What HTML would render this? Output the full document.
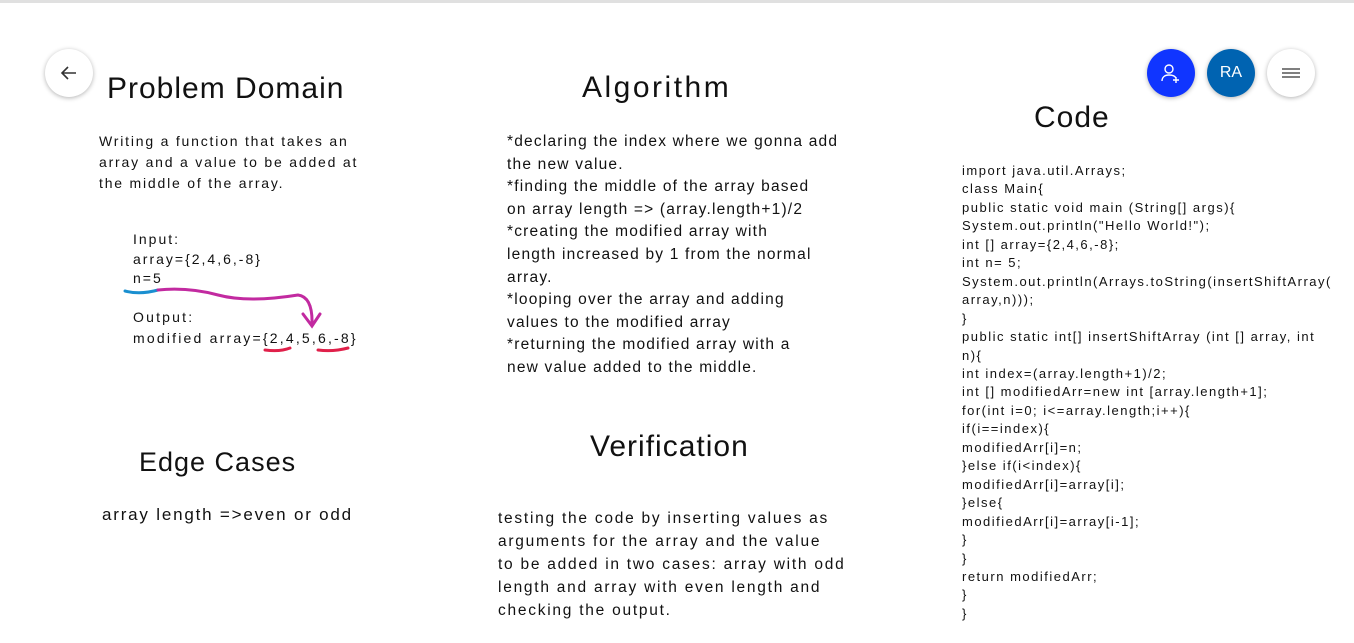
<!DOCTYPE html>
<html><head><meta charset="utf-8"><style>
body{margin:0;width:1354px;height:643px;background:#fff;position:relative;overflow:hidden;font-family:"Liberation Sans",sans-serif;color:#111}
.t{position:absolute;white-space:nowrap}
.h{font-size:30px;letter-spacing:1px}
.b{font-size:15px;line-height:22.6px}
.c{font-size:13px;line-height:18.45px;letter-spacing:1.5px}
.btn{position:absolute;width:48px;height:48px;border-radius:50%;box-shadow:0 1px 5px rgba(0,0,0,.3);display:flex;align-items:center;justify-content:center}
</style></head><body>
<div style="position:absolute;left:0;top:0;width:1354px;height:3px;background:#e0e0e0"></div>
<div class="btn" style="left:45px;top:49px;background:#fff"><svg width="20" height="20" viewBox="0 0 20 20"><path d="M17 10H4M9 4L3 10l6 6" fill="none" stroke="#333" stroke-width="1.6"/></svg></div>
<div class="btn" style="left:1147px;top:49px;background:#1035ff"><svg width="22" height="22" viewBox="0 0 22 22" fill="none" stroke="#fff" stroke-width="1.4"><circle cx="9" cy="7" r="4"/><path d="M2 19c0-4 3-6 7-6s6 1 7 3M16 15v6M13 18h6"/></svg></div>
<div class="btn" style="left:1207px;top:49px;background:#0063b1;color:#fff;font-size:16px">RA</div>
<div class="btn" style="left:1267px;top:49px;background:#fff"><svg width="18" height="12"><path d="M0 2h18M0 6h18M0 10h18" stroke="#555" stroke-width="1.6"/></svg></div>

<div class="t h" style="left:107px;top:72px">Problem Domain</div>
<div class="t h" style="left:582px;top:71px;letter-spacing:2.5px">Algorithm</div>
<div class="t h" style="left:1034px;top:101px">Code</div>
<div class="t h" style="left:139px;top:447px;font-size:27px">Edge Cases</div>
<div class="t h" style="left:590px;top:430px">Verification</div>

<div class="t b" style="left:99px;top:131px;font-size:14px;line-height:21px;letter-spacing:1.8px">Writing a function that takes an<br>array and a value to be added at<br>the middle of the array.</div>
<div class="t b" style="left:133px;top:230px;font-size:14px;line-height:19.5px;letter-spacing:2px">Input:<br>array={2,4,6,-8}<br>n=5</div>
<div class="t b" style="left:133px;top:307px;font-size:14px;line-height:21px;letter-spacing:2.2px">Output:<br>modified array={2,4,5,6,-8}</div>
<svg style="position:absolute;left:120px;top:280px" width="250" height="80" fill="none" stroke-width="3" stroke-linecap="round">
<path d="M5 11q15 4 33 -1" stroke="#1a8fd0"/>
<path d="M38 10q30 -3 60 5t80 0q15 2 14 30M183 34l9 12 8-12" stroke="#c22aa0"/>
<path d="M145 70q15 2 25 -2M198 70q15 2 30 -2" stroke="#e0204a"/>
</svg>
<div class="t b" style="left:102px;top:504px;font-size:17px;letter-spacing:1.8px">array length =&gt;even or odd</div>

<div class="t b" style="left:507px;top:131px;font-size:15.5px;letter-spacing:1.2px">*declaring the index where we gonna add<br>the new value.<br>*finding the middle of the array based<br>on array length =&gt; (array.length+1)/2<br>*creating the modified array with<br>length increased by 1 from the normal<br>array.<br>*looping over the array and adding<br>values to the modified array<br>*returning the modified array with a<br>new value added to the middle.</div>
<div class="t b" style="left:498px;top:507px;font-size:15.5px;line-height:23px;letter-spacing:1.75px">testing the code by inserting values as<br>arguments for the array and the value<br>to be added in two cases: array with odd<br>length and array with even length and<br>checking the output.</div>

<div class="t c" style="left:962px;top:162px">import java.util.Arrays;<br>class Main{<br>public static void main (String[] args){<br>System.out.println("Hello World!");<br>int [] array={2,4,6,-8};<br>int n= 5;<br>System.out.println(Arrays.toString(insertShiftArray(<br>array,n)));<br>}<br>public static int[] insertShiftArray (int [] array, int<br>n){<br>int index=(array.length+1)/2;<br>int [] modifiedArr=new int [array.length+1];<br>for(int i=0; i&lt;=array.length;i++){<br>if(i==index){<br>modifiedArr[i]=n;<br>}else if(i&lt;index){<br>modifiedArr[i]=array[i];<br>}else{<br>modifiedArr[i]=array[i-1];<br>}<br>}<br>return modifiedArr;<br>}<br>}</div>
</body></html>
